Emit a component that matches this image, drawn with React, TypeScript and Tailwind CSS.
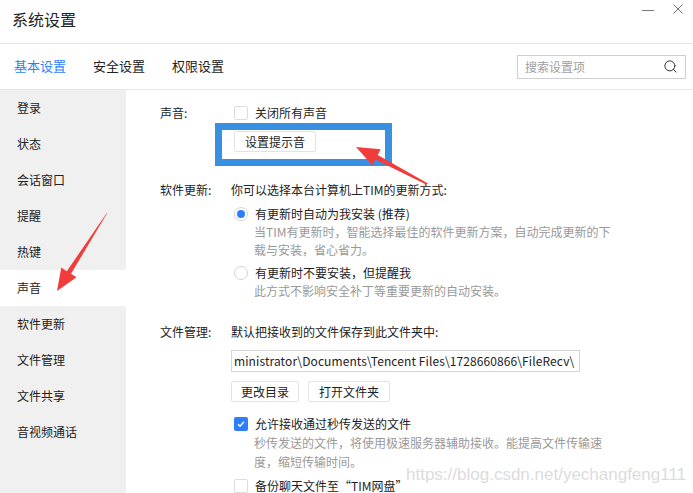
import { Search } from "lucide-react";

const font = "font-['Microsoft_YaHei','Noto_Sans_CJK_SC',sans-serif]";

const menu = ["登录", "状态", "会话窗口", "提醒", "热键", "声音", "软件更新", "文件管理", "文件共享", "音视频通话"];

function Box({ checked = false }: { checked?: boolean }) {
  if (checked) {
    return (
      <span className="flex h-[14px] w-[14px] items-center justify-center rounded-[2px] bg-[#2d7ff9]">
        <svg width="10" height="10" viewBox="0 0 10 10">
          <path d="M2 5.2l2 2 4-4.4" fill="none" stroke="white" strokeWidth="1.4" />
        </svg>
      </span>
    );
  }
  return <span className="h-[14px] w-[14px] rounded-[2px] border border-[#dcdcdc] bg-white" />;
}

function Radio({ checked = false }: { checked?: boolean }) {
  return (
    <span className="flex h-[14px] w-[14px] items-center justify-center rounded-full border border-[#d4d4d4] bg-white">
      {checked && <span className="h-[8px] w-[8px] rounded-full bg-[#2d7ff9]" />}
    </span>
  );
}

function Btn({ children, w }: { children: string; w: string }) {
  return (
    <button
      type="button"
      className={`flex h-[21px] items-center justify-center rounded-[2px] border border-[#e3e3e3] bg-white text-[12px] text-[#222] ${w}`}
    >
      {children}
    </button>
  );
}

export default function App() {
  return (
    <div className={`relative h-[493px] w-[693px] overflow-hidden bg-white text-[#222] ${font}`}>
      {/* title bar */}
      <div className="flex h-[44px] items-start justify-between border-b border-[#e6e6e6]">
        <h1 className="pl-[12px] pt-[8px] text-[16px] leading-[22px]">系统设置</h1>
        <div className="flex items-center gap-[18px] pr-[9px] pt-[3px]">
          <svg width="12" height="12" viewBox="0 0 12 12">
            <path d="M0 7.5h12" stroke="#777" strokeWidth="1" />
          </svg>
          <svg width="12" height="12" viewBox="0 0 12 12">
            <path d="M1.5 1.5l9 9M10.5 1.5l-9 9" stroke="#777" strokeWidth="1" />
          </svg>
        </div>
      </div>

      {/* tabs */}
      <div className="flex h-[46px] items-center justify-between border-b border-[#e6e6e6] pl-[9px] pr-[7px]">
        <div className="flex h-full items-start gap-[22px]">
          <div className="flex h-full flex-col items-center">
            <span className="px-[5px] pt-[13px] text-[13px] leading-[18px] text-[#2d7ff9]">基本设置</span>
            <span className="mt-[16px] h-[2px] w-[62px] bg-[#2d7ff9]" />
          </div>
          <span className="pt-[13px] text-[13px] leading-[18px]">安全设置</span>
          <span className="pl-[5px] pt-[13px] text-[13px] leading-[18px]">权限设置</span>
        </div>
        <div className="flex h-[24px] w-[169px] items-center justify-between border border-[#cfcfcf] px-[7px]">
          <span className="text-[12px] text-[#a0a0a0]">搜索设置项</span>
          <Search size={15} strokeWidth={1.6} color="#333" />
        </div>
      </div>

      {/* body */}
      <div className="flex h-[403px]">
        <nav className="w-[126px] bg-[#f0f0f0]">
          {menu.map((m) => (
            <div
              key={m}
              className={`flex h-[36px] items-center pl-[17px] text-[12px] ${m === "声音" ? "bg-white" : ""}`}
            >
              {m}
            </div>
          ))}
        </nav>

        <main className="flex-1 pl-[34px] pt-[14px] text-[12px] leading-[18px]">
          {/* sound */}
          <section className="flex">
            <div className="w-[71px]">声音:</div>
            <div className="flex flex-col">
              <label className="flex items-center gap-[7px] pl-[3px]">
                <Box />
                <span>关闭所有声音</span>
              </label>
              <div className="mt-[9px] pl-[3px]">
                <Btn w="w-[82px]">设置提示音</Btn>
              </div>
            </div>
          </section>

          {/* update */}
          <section className="mt-[29px] flex">
            <div className="w-[71px]">软件更新:</div>
            <div className="flex flex-col">
              <div>你可以选择本台计算机上TIM的更新方式:</div>
              <label className="mt-[6px] flex items-center gap-[7px] pl-[3px]">
                <Radio checked />
                <span>有更新时自动为我安装 (推荐)</span>
              </label>
              <div className="pl-[23px] text-[#999]">
                当TIM有更新时，智能选择最佳的软件更新方案，自动完成更新的下
                <br />
                载与安装，省心省力。
              </div>
              <label className="mt-[5px] flex items-center gap-[7px] pl-[3px]">
                <Radio />
                <span>有更新时不要安装，但提醒我</span>
              </label>
              <div className="pl-[23px] text-[#999]">此方式不影响安全补丁等重要更新的自动安装。</div>
            </div>
          </section>

          {/* files */}
          <section className="mt-[23px] flex">
            <div className="w-[71px]">文件管理:</div>
            <div className="flex flex-col">
              <div>默认把接收到的文件保存到此文件夹中:</div>
              <div className="mt-[9px] flex h-[22px] w-[349px] items-center overflow-hidden whitespace-nowrap border border-[#d6d6d6] pl-[2px] text-[12px] tracking-[0.1px]">
                ministrator\Documents\Tencent Files\1728660866\FileRecv\
              </div>
              <div className="mt-[9px] flex gap-[9px]">
                <Btn w="w-[68px]">更改目录</Btn>
                <Btn w="w-[82px]">打开文件夹</Btn>
              </div>
              <label className="mt-[13px] flex items-center gap-[7px] pl-[3px]">
                <Box checked />
                <span>允许接收通过秒传发送的文件</span>
              </label>
              <div className="pl-[23px] leading-[19px] text-[#999]">
                秒传发送的文件，将使用极速服务器辅助接收。能提高文件传输速
                <br />
                度，缩短传输时间。
              </div>
              <label className="mt-[6px] flex items-center gap-[7px] pl-[3px]">
                <Box />
                <span>备份聊天文件至“TIM网盘”</span>
              </label>
            </div>
          </section>
        </main>
      </div>

      {/* annotation: highlight box */}
      <div className="absolute left-[215px] top-[123px] h-[43px] w-[177px] border-[7px] border-[#3a90e0]" />

      {/* annotation: arrows */}
      <svg className="pointer-events-none absolute left-0 top-0" width="693" height="493">
        <polygon
          fill="#f23c3c"
          points="107.4,212.7 106.6,213.3 66.8,271.2 61.3,267.6 57,291 76.5,277.3 71,273.8"
        />
        <polygon
          fill="#f23c3c"
          points="428,183.5 426.6,184.7 375.3,159.5 372.3,165.3 356,147 380.7,149.3 377.7,155.1"
        />
      </svg>

      {/* watermark */}
      <div className="absolute left-[406px] top-[464px] font-['Liberation_Sans',sans-serif] text-[17px] leading-[21px] text-[#dcdcdc]">
        https://blog.csdn.net/yechangfeng111
      </div>
    </div>
  );
}
